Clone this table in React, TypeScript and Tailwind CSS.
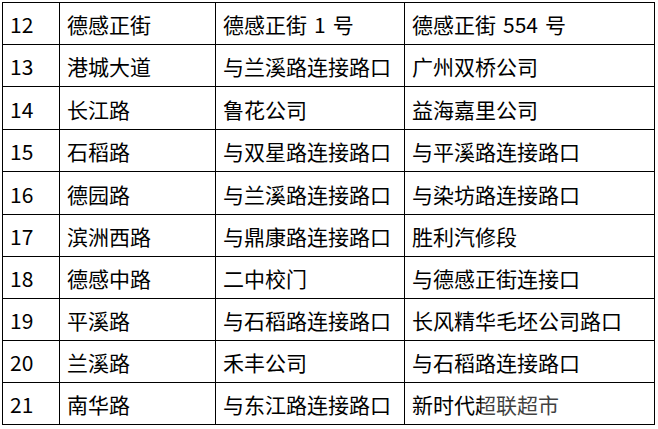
import React from "react";

const rows: [string, string, string, string][] = [
  ["12", "德感正街", "德感正街 1 号", "德感正街 554 号"],
  ["13", "港城大道", "与兰溪路连接路口", "广州双桥公司"],
  ["14", "长江路", "鲁花公司", "益海嘉里公司"],
  ["15", "石稻路", "与双星路连接路口", "与平溪路连接路口"],
  ["16", "德园路", "与兰溪路连接路口", "与染坊路连接路口"],
  ["17", "滨洲西路", "与鼎康路连接路口", "胜利汽修段"],
  ["18", "德感中路", "二中校门", "与德感正街连接口"],
  ["19", "平溪路", "与石稻路连接路口", "长风精华毛坯公司路口"],
  ["20", "兰溪路", "禾丰公司", "与石稻路连接路口"],
  ["21", "南华路", "与东江路连接路口", "新时代超联超市"],
];

function Cell({ text }: { text: string }) {
  const parts = text.split(" ");
  return (
    <>
      {parts.map((p, k) => (
        <React.Fragment key={k}>
          {k > 0 && <span className="inline-block w-[7px]" />}
          {p}
        </React.Fragment>
      ))}
    </>
  );
}

export default function App() {
  return (
    <div
      className="w-[658px] h-[429px] bg-white text-black overflow-hidden pl-[2px] pt-[2px]"
      style={{ fontFamily: '"Noto Sans CJK SC", "Noto Sans", sans-serif' }}
    >
      <div className="relative w-max grid grid-cols-[57px_156px_189px_250px] grid-rows-[42px_42px_43px_42px_43px_42px_42px_42px_42px_42px] border-l border-t border-black">
        {rows.map((r, i) =>
          r.map((c, j) => (
            <div
              key={`${i}-${j}`}
              className="flex items-center border-r border-b border-black pl-[7px] pt-[2px] text-[21px] leading-none whitespace-nowrap"
            >
              <Cell text={c} />
            </div>
          ))
        )}
        <div className="absolute left-[478px] top-[390px] w-[82px] h-[26px] bg-white/25 pointer-events-none" />
      </div>
    </div>
  );
}
